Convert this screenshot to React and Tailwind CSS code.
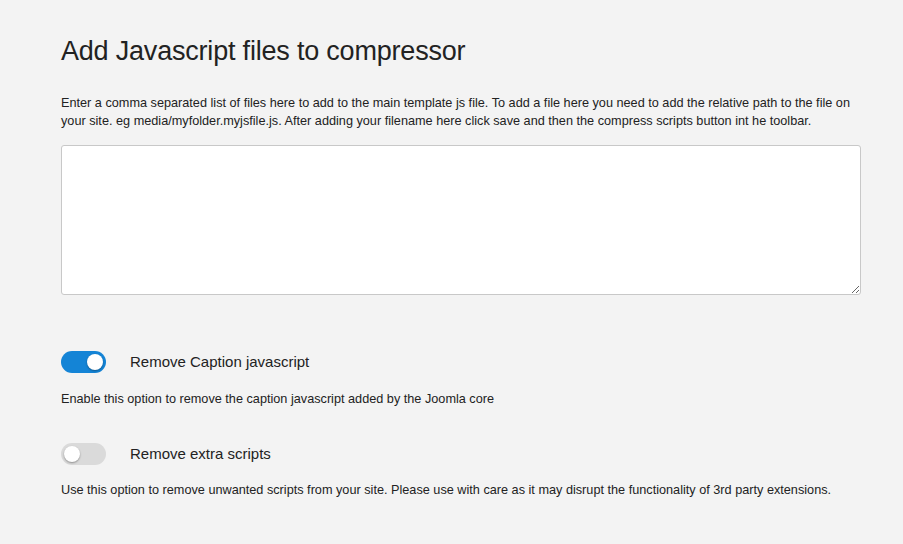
const Toggle = ({ on }) => (
  <div
    className={
      "relative w-[45px] h-[22px] rounded-full shrink-0 " +
      (on ? "bg-[#1484d6]" : "bg-[#dadada]")
    }
  >
    <div
      className={
        "absolute top-[3px] w-[16px] h-[16px] rounded-full bg-white shadow-[0_1px_2px_rgba(0,0,0,0.35)] " +
        (on ? "left-[26px]" : "left-[3px]")
      }
    />
  </div>
);

const Option = ({ on, label, help }) => (
  <div className="flex flex-col">
    <div className="flex items-center gap-[24px]">
      <Toggle on={on} />
      <span className="text-[15px] text-[#222]">{label}</span>
    </div>
    <p className="mt-[16px] text-[12.7px] leading-[18px] text-[#222]">{help}</p>
  </div>
);

export default function App() {
  return (
    <div className="min-h-[544px] w-full bg-[#f3f3f3] font-['Liberation_Sans',Arial,sans-serif] pl-[61px] pr-[30px] pt-[33px]">
      <h1 className="text-[27px] leading-[36px] text-[#222] tracking-[-0.2px]">
        Add Javascript files to compressor
      </h1>
      <p className="mt-[25px] text-[12.7px] leading-[18px] text-[#222] w-[800px]">
        Enter a comma separated list of files here to add to the main template js file. To add a file here you need to add the relative path to the file on your site. eg media/myfolder.myjsfile.js. After adding your filename here click save and then the compress scripts button int he toolbar.
      </p>
      <textarea className="mt-[15px] block w-[800px] h-[150px] bg-white border border-[#c8c8c8] rounded-[3px] resize" />
      <div className="mt-[56px] flex flex-col gap-[35px]">
        <Option
          on
          label="Remove Caption javascript"
          help="Enable this option to remove the caption javascript added by the Joomla core"
        />
        <Option
          label="Remove extra scripts"
          help="Use this option to remove unwanted scripts from your site. Please use with care as it may disrupt the functionality of 3rd party extensions."
        />
      </div>
    </div>
  );
}
